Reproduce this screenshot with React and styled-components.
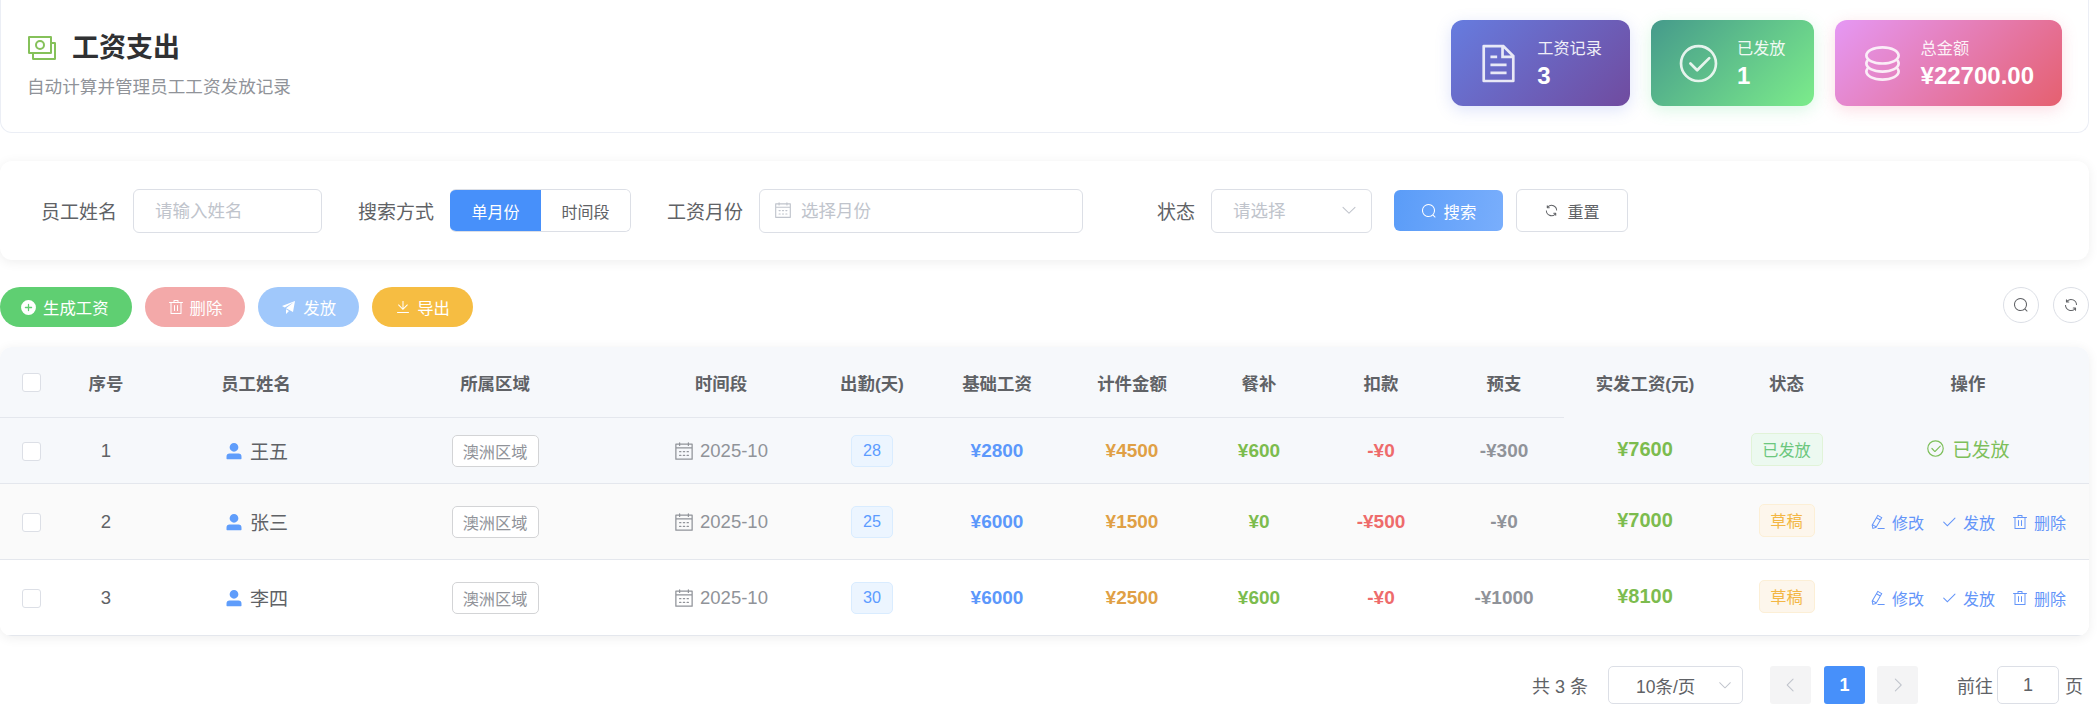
import React from 'react';
import styled, { createGlobalStyle } from 'styled-components';

const GlobalStyle = createGlobalStyle`
  html, body {
    margin: 0;
    padding: 0;
    background: #fff;
    font-family: "Liberation Sans", "Noto Sans CJK SC", sans-serif;
  }
  * { box-sizing: border-box; }
`;

const paths = {
  money: [
    'M256 640v192h640V384H768v-64h150.976c14.272 0 19.456 1.472 24.64 4.288a29.056 29.056 0 0 1 12.16 12.096c2.752 5.184 4.224 10.368 4.224 24.64v493.952c0 14.272-1.472 19.456-4.288 24.64a29.056 29.056 0 0 1-12.096 12.16c-5.184 2.752-10.368 4.224-24.64 4.224H233.024c-14.272 0-19.456-1.472-24.64-4.288a29.056 29.056 0 0 1-12.16-12.096c-2.688-5.184-4.224-10.368-4.224-24.576V640h64z',
    'M768 192H128v448h640V192zm64-22.976v493.952c0 14.272-1.472 19.456-4.288 24.64a29.056 29.056 0 0 1-12.096 12.16c-5.184 2.752-10.368 4.224-24.64 4.224H105.024c-14.272 0-19.456-1.472-24.64-4.288a29.056 29.056 0 0 1-12.16-12.096C65.536 682.432 64 677.248 64 663.04V169.024c0-14.272 1.472-19.456 4.288-24.64a29.056 29.056 0 0 1 12.096-12.16C85.568 129.536 90.752 128 104.96 128h685.952c14.272 0 19.456 1.472 24.64 4.288a29.056 29.056 0 0 1 12.16 12.096c2.752 5.184 4.224 10.368 4.224 24.64z',
    'M448 576a160 160 0 1 1 0-320 160 160 0 0 1 0 320zm0-64a96 96 0 1 0 0-192 96 96 0 0 0 0 192z',
  ],
  document: ['M832 384H576V128H192v768h640V384zm-26.496-64L640 154.496V320h165.504zM160 64h480l256 256v608a32 32 0 0 1-32 32H160a32 32 0 0 1-32-32V96a32 32 0 0 1 32-32zm160 448h384v64H320v-64zm0-192h160v64H320v-64zm0 384h384v64H320v-64z'],
  circleCheck: [
    'M512 896a384 384 0 1 0 0-768 384 384 0 0 0 0 768zm0 64a448 448 0 1 1 0-896 448 448 0 0 1 0 896z',
    'M745.344 361.344a32 32 0 0 1 45.312 45.312l-288 288a32 32 0 0 1-45.312 0l-160-160a32 32 0 1 1 45.312-45.312L480 626.752l265.344-265.408z',
  ],
  coin: [
    'm161.92 580.736 29.888 58.88C171.328 659.776 160 681.728 160 704c0 82.304 155.328 160 352 160s352-77.696 352-160c0-22.272-11.392-44.16-31.808-64.32l30.464-58.432C903.936 615.808 928 657.664 928 704c0 129.728-188.544 224-416 224S96 833.728 96 704c0-46.592 24.32-88.576 65.92-123.264z',
    'm161.92 388.736 29.888 58.88C171.328 467.84 160 489.792 160 512c0 82.304 155.328 160 352 160s352-77.696 352-160c0-22.272-11.392-44.16-31.808-64.32l30.464-58.432C903.936 423.808 928 465.664 928 512c0 129.728-188.544 224-416 224S96 641.728 96 512c0-46.592 24.32-88.576 65.92-123.264z',
    'M512 544c-227.456 0-416-94.272-416-224S284.544 96 512 96s416 94.272 416 224-188.544 224-416 224zm0-64c196.672 0 352-77.696 352-160S708.672 160 512 160s-352 77.696-352 160 155.328 160 352 160z',
  ],
  search: ['m795.904 750.72 124.992 124.928a32 32 0 0 1-45.248 45.248L750.656 795.904a416 416 0 1 1 45.248-45.248zM480 832a352 352 0 1 0 0-704 352 352 0 0 0 0 704z'],
  refresh: ['M771.776 794.88A384 384 0 0 1 128 512h64a320 320 0 0 0 555.712 216.448H654.72a32 32 0 1 1 0-64h149.056a32 32 0 0 1 32 32v148.928a32 32 0 1 1-64 0v-50.56zM276.288 295.616h92.992a32 32 0 0 1 0 64H220.16a32 32 0 0 1-32-32V178.56a32 32 0 0 1 64 0v50.56A384 384 0 0 1 896.128 512h-64a320 320 0 0 0-555.776-216.384z'],
  calendar: ['M128 384v512h768V192H768v32a32 32 0 1 1-64 0v-32H320v32a32 32 0 0 1-64 0v-32H128v128h768v64H128zm192-256h384V96a32 32 0 1 1 64 0v32h160a32 32 0 0 1 32 32v768a32 32 0 0 1-32 32H96a32 32 0 0 1-32-32V160a32 32 0 0 1 32-32h160V96a32 32 0 0 1 64 0v32zm-32 384h64a32 32 0 0 1 0 64h-64a32 32 0 0 1 0-64zm0 192h64a32 32 0 1 1 0 64h-64a32 32 0 1 1 0-64zm192-192h64a32 32 0 0 1 0 64h-64a32 32 0 0 1 0-64zm0 192h64a32 32 0 1 1 0 64h-64a32 32 0 1 1 0-64zm192-192h64a32 32 0 1 1 0 64h-64a32 32 0 1 1 0-64zm0 192h64a32 32 0 1 1 0 64h-64a32 32 0 1 1 0-64z'],
  user: ['M288 320a224 224 0 1 0 448 0 224 224 0 1 0-448 0zm544 608H160a32 32 0 0 1-32-32v-96a160 160 0 0 1 160-160h448a160 160 0 0 1 160 160v96a32 32 0 0 1-32 32z'],
  trash: ['M160 256H96a32 32 0 0 1 0-64h256V95.936a32 32 0 0 1 32-32h256a32 32 0 0 1 32 32V192h256a32 32 0 1 1 0 64h-64v672a32 32 0 0 1-32 32H192a32 32 0 0 1-32-32V256zm448-64v-64H416v64h192zM224 896h576V256H224v640zm192-128a32 32 0 0 1-32-32V416a32 32 0 0 1 64 0v320a32 32 0 0 1-32 32zm192 0a32 32 0 0 1-32-32V416a32 32 0 0 1 64 0v320a32 32 0 0 1-32 32z'],
  check: ['M406.656 706.944 195.84 496.256a32 32 0 1 0-45.248 45.248l256 256 512-512a32 32 0 0 0-45.248-45.248L406.592 706.944z'],
  pen: ['m199.04 672.64 193.984 112 224-387.968-193.92-112-224 388.032zm-23.872 60.16 32.896 148.288 144.896-45.696L175.168 732.8zM455.04 229.248l193.92 112 56.704-98.112-193.984-112-56.64 98.112zM104.32 708.8l384-665.024 304.768 175.936L409.152 884.8h.064l-248.448 78.336L104.32 708.8zm384 254.272v-64h448v64h-448z'],
  send: ['m64 448 832-320-128 704-446.08-243.328L832 192 242.816 545.472 64 448zm256 512V657.024L512 768 320 960z'],
  download: ['M160 832h704a32 32 0 1 1 0 64H160a32 32 0 1 1 0-64zm384-253.696 236.288-236.352 45.248 45.248L508.8 704 192 387.2l45.248-45.248L480 584.704V128h64v450.304z'],
  plus: ['M512 64a448 448 0 1 1 0 896 448 448 0 0 1 0-896zm-38.4 409.6H326.4a38.4 38.4 0 1 0 0 76.8h147.2v147.2a38.4 38.4 0 0 0 76.8 0V550.4h147.2a38.4 38.4 0 0 0 0-76.8H550.4V326.4a38.4 38.4 0 1 0-76.8 0v147.2z'],
  down: ['M831.872 340.864 512 652.672 192.128 340.864a30.592 30.592 0 0 0-42.752 0 29.12 29.12 0 0 0 0 41.6L489.664 714.24a32 32 0 0 0 44.672 0l340.288-331.712a29.12 29.12 0 0 0 0-41.728 30.592 30.592 0 0 0-42.752 0z'],
  left: ['M609.408 149.376 277.76 489.6a32 32 0 0 0 0 44.672l331.648 340.352a29.12 29.12 0 0 0 41.728 0 30.592 30.592 0 0 0 0-42.752L339.264 511.936l311.872-319.872a30.592 30.592 0 0 0 0-42.688 29.12 29.12 0 0 0-41.728 0z'],
  right: ['M340.864 149.312a30.592 30.592 0 0 0 0 42.752L652.736 512 340.864 831.872a30.592 30.592 0 0 0 0 42.752 29.12 29.12 0 0 0 41.728 0L714.24 534.336a32 32 0 0 0 0-44.672L382.592 149.376a29.12 29.12 0 0 0-41.728 0z'],
};

const Svg = styled.svg`
  flex: none;
  display: block;
  fill: currentColor;
`;

const Icon = ({ name, size = 16 }) => (
  <Svg width={size} height={size} viewBox="0 0 1024 1024">
    {paths[name].map(d => <path key={d} d={d} />)}
  </Svg>
);

const Page = styled.div`
  width: 2097px;
  min-height: 711px;
  padding-right: 8px;
  background: #fff;
  color: #606266;
`;

const HeaderCard = styled.header`
  height: 133px;
  display: flex;
  justify-content: space-between;
  padding: 20px 26px 0 25px;
  background: #fff;
  border: 1px solid #ebeef5;
  border-top: none;
  border-radius: 0 0 12px 12px;
`;

const TitleBlock = styled.div`
  padding-top: 9px;
`;

const TitleRow = styled.div`
  display: flex;
  align-items: center;
  gap: 14px;
  color: #85c15a;
`;

const PageTitle = styled.h1`
  margin: 0;
  font-size: 27px;
  line-height: 38px;
  font-weight: 700;
  color: #303133;
`;

const SubTitle = styled.p`
  margin: 7px 0 0 1px;
  font-size: 17.6px;
  line-height: 26px;
  color: #909399;
`;

const Stats = styled.div`
  display: flex;
  gap: 21px;
`;

const StatCard = styled.div`
  height: 86px;
  display: flex;
  align-items: center;
  gap: 17px;
  padding: 0 28px 0 26px;
  border-radius: 12px;
  color: #fff;
  background: ${props => props.$bg};
  box-shadow: 0 4px 16px ${props => props.$glow};
`;

const StatIcon = styled.div`
  opacity: 0.85;
`;

const StatLabel = styled.div`
  font-size: 16.2px;
  line-height: 22px;
  opacity: 0.9;
`;

const StatValue = styled.div`
  margin-top: 3px;
  font-size: 24px;
  line-height: 28px;
  font-weight: 700;
`;

const SearchCard = styled.section`
  height: 99px;
  margin-top: 28px;
  display: flex;
  align-items: center;
  padding-left: 40px;
  border-radius: 12px;
  background: #fff;
  box-shadow: 0 2px 12px rgba(0, 0, 0, 0.07);
`;

const FormItem = styled.div`
  display: flex;
  align-items: center;
  gap: 16px;
  margin-right: 36px;
`;

const FormLabel = styled.label`
  width: ${props => props.$width || 76}px;
  text-align: right;
  font-size: 19px;
  color: #606266;
  white-space: nowrap;
`;

const Field = styled.div`
  width: ${props => props.$width}px;
  height: 44px;
  display: flex;
  align-items: center;
  gap: 9px;
  padding-left: ${props => props.$pad || 21}px;
  padding-right: 13px;
  padding-bottom: 2px;
  border: 1px solid #dcdfe6;
  border-radius: 6px;
  background: #fff;
  font-size: 17.5px;
  color: #c0c4cc;
`;

const FieldText = styled.span`
  flex: 1;
`;

const Segmented = styled.div`
  display: flex;
  height: 43px;
  border-radius: 6px;
  overflow: hidden;
  border: 1px solid #dcdfe6;
  border-left: none;
`;

const Segment = styled.div`
  width: ${props => props.$width}px;
  display: flex;
  align-items: center;
  justify-content: center;
  font-size: 16px;
  background: ${props => (props.$active ? '#4790fa' : '#fff')};
  color: ${props => (props.$active ? '#fff' : '#606266')};
`;

const SearchButton = styled.button`
  width: 109px;
  height: 41px;
  margin-left: -14px;
  display: flex;
  align-items: center;
  justify-content: center;
  gap: 7px;
  border: none;
  border-radius: 6px;
  background: linear-gradient(100deg, #5a9cf8, #79aefc);
  color: #fff;
  font: inherit;
  font-size: 16.4px;
`;

const ResetButton = styled.button`
  width: 112px;
  height: 43px;
  margin-left: 13px;
  display: flex;
  align-items: center;
  justify-content: center;
  gap: 8px;
  border: 1px solid #dcdfe6;
  border-radius: 6px;
  background: #fff;
  color: #606266;
  font: inherit;
  font-size: 16px;
`;

const Toolbar = styled.div`
  height: 40px;
  margin-top: 27px;
  display: flex;
  justify-content: space-between;
  align-items: flex-start;
`;

const ToolGroup = styled.div`
  display: flex;
  gap: ${props => props.$gap}px;
`;

const PillButton = styled.button`
  height: 40px;
  display: flex;
  align-items: center;
  gap: 6px;
  padding: 0 23px 0 ${props => props.$left || 23}px;
  border: none;
  border-radius: 20px;
  background: ${props => props.$bg};
  color: #fff;
  font: inherit;
  font-size: 16.4px;
`;

const RoundButton = styled.button`
  width: 36px;
  height: 36px;
  display: flex;
  align-items: center;
  justify-content: center;
  padding: 0;
  border: 1px solid #dcdfe6;
  border-radius: 50%;
  background: #fff;
  color: #606266;
`;

const TableWrap = styled.div`
  margin-top: 20px;
  border-radius: 12px;
  overflow: hidden;
  box-shadow: 0 2px 12px rgba(0, 0, 0, 0.07);
`;

const Table = styled.table`
  width: 2089px;
  table-layout: fixed;
  border-collapse: separate;
  border-spacing: 0;
`;

const Th = styled.th`
  height: 71px;
  padding: 0;
  background: #f6f8fb;
  font-size: 17.4px;
  font-weight: 700;
  color: #606266;
  text-align: center;
  border-bottom: 1px solid ${props => (props.$fixed ? '#f6f8fb' : '#e4e7ed')};
`;

const Tr = styled.tr`
  background: ${props => props.$bg};
`;

const Td = styled.td`
  height: ${props => props.$height}px;
  padding: 0 0 ${props => (props.$fixed ? 3 : 0)}px;
  text-align: center;
  font-size: 18.5px;
  color: #606266;
  border-bottom: 1px solid #e4e7ed;
`;

const CheckBox = styled.span`
  display: inline-block;
  width: 19px;
  height: 19px;
  vertical-align: middle;
  background: #fff;
  border: 1px solid #dcdfe6;
  border-radius: 3px;
`;

const Inline = styled.span`
  display: inline-flex;
  align-items: center;
  justify-content: center;
  vertical-align: middle;
  gap: ${props => props.$gap || 6}px;
  color: ${props => props.$color || 'inherit'};
`;

const IconTint = styled.span`
  display: flex;
  color: ${props => props.$color};
`;

const Tag = styled.span`
  display: inline-flex;
  align-items: center;
  justify-content: center;
  vertical-align: middle;
  width: ${props => props.$width}px;
  height: ${props => props.$height || 32}px;
  font-size: 16.2px;
  border-radius: 5px;
  border: 1px solid ${props => props.$border};
  background: ${props => props.$bg};
  color: ${props => props.$color};
`;

const Amount = styled.span`
  font-size: ${props => props.$size || 19}px;
  font-weight: 700;
  color: ${props => props.$color};
`;

const DateText = styled.span`
  font-size: 18.5px;
  color: #909399;
`;

const NameText = styled.span`
  font-size: 19px;
  color: #606266;
`;

const ActionRow = styled.div`
  display: flex;
  justify-content: center;
  gap: 17px;
`;

const ActionLink = styled.span`
  display: flex;
  align-items: center;
  gap: 6px;
  font-size: 16px;
  color: #6495f9;
`;

const DoneText = styled.span`
  display: inline-flex;
  align-items: center;
  gap: 7px;
  font-size: 19px;
  color: #7dbf5a;
`;

const Pagination = styled.nav`
  height: 38px;
  margin-top: 30px;
  padding-right: 6px;
  display: flex;
  align-items: center;
  justify-content: flex-end;
  font-size: 18px;
  color: #606266;
`;

const PagerSelect = styled.div`
  width: 135px;
  height: 38px;
  margin: 0 27px 0 20px;
  display: flex;
  align-items: center;
  justify-content: space-between;
  padding: 0 9px 0 27px;
  font-size: 17.5px;
  border: 1px solid #dcdfe6;
  border-radius: 5px;
`;

const PagerChevron = styled.span`
  display: flex;
  color: #c0c4cc;
`;

const PageBox = styled.div`
  width: 41px;
  height: 38px;
  margin-right: ${props => props.$gap || 0}px;
  display: flex;
  align-items: center;
  justify-content: center;
  border-radius: 3px;
  background: ${props => (props.$active ? '#4790fa' : '#f4f4f5')};
  color: ${props => (props.$active ? '#fff' : '#c0c4cc')};
  font-weight: 700;
  font-size: 18px;
`;

const JumpInput = styled.div`
  width: 62px;
  height: 38px;
  margin: 0 6px 0 4px;
  display: flex;
  align-items: center;
  justify-content: center;
  border: 1px solid #dcdfe6;
  border-radius: 5px;
`;

const columns = [
  { width: 62 }, { width: 88, label: '序号' }, { width: 212, label: '员工姓名' }, { width: 266, label: '所属区域' },
  { width: 186, label: '时间段' }, { width: 116, label: '出勤(天)' }, { width: 134, label: '基础工资' },
  { width: 136, label: '计件金额' }, { width: 118, label: '餐补' }, { width: 126, label: '扣款' }, { width: 120, label: '预支' },
  { width: 162, label: '实发工资(元)', fixed: true }, { width: 121, label: '状态', fixed: true }, { width: 242, label: '操作', fixed: true },
];

const rows = [
  { id: 1, name: '王五', days: 28, base: 2800, piece: 4500, meal: 600, cut: 0, adv: 300, pay: 7600, done: true, bg: '#f6f8fb', height: 66 },
  { id: 2, name: '张三', days: 25, base: 6000, piece: 1500, meal: 0, cut: 500, adv: 0, pay: 7000, bg: '#fafafa', height: 76 },
  { id: 3, name: '李四', days: 30, base: 6000, piece: 2500, meal: 600, cut: 0, adv: 1000, pay: 8100, bg: '#fff', height: 76 },
];

const Row = ({ r }) => (
  <Tr $bg={r.bg}>
    <Td $height={r.height}><CheckBox /></Td>
    <Td $height={r.height}>{r.id}</Td>
    <Td $height={r.height}>
      <Inline><IconTint $color="#5f9dfb"><Icon name="user" size={20} /></IconTint><NameText>{r.name}</NameText></Inline>
    </Td>
    <Td $height={r.height}><Tag $width={87} $border="#d3d4d6" $bg="#fff" $color="#909399">澳洲区域</Tag></Td>
    <Td $height={r.height}>
      <Inline><IconTint $color="#909399"><Icon name="calendar" size={20} /></IconTint><DateText>2025-10</DateText></Inline>
    </Td>
    <Td $height={r.height}><Tag $width={42} $border="#d9ecff" $bg="#ecf5ff" $color="#5c9cff">{r.days}</Tag></Td>
    <Td $height={r.height}><Amount $color="#5c98fb">¥{r.base}</Amount></Td>
    <Td $height={r.height}><Amount $color="#e0a045">¥{r.piece}</Amount></Td>
    <Td $height={r.height}><Amount $color="#7cbc4e">¥{r.meal}</Amount></Td>
    <Td $height={r.height}><Amount $color="#ee6b6b">-¥{r.cut}</Amount></Td>
    <Td $height={r.height}><Amount $color="#909399">-¥{r.adv}</Amount></Td>
    <Td $height={r.height} $fixed><Amount $size={20} $color="#7cbc4e">¥{r.pay}</Amount></Td>
    <Td $height={r.height} $fixed>
      {r.done
        ? <Tag $width={72} $height={33} $border="#e1f3d8" $bg="#ecf9f0" $color="#6cc77e">已发放</Tag>
        : <Tag $width={56} $height={33} $border="#fcefd6" $bg="#fdf6ec" $color="#f3b644">草稿</Tag>}
    </Td>
    <Td $height={r.height} $fixed={r.done}>
      {r.done
        ? <DoneText><Icon name="circleCheck" size={19} />已发放</DoneText>
        : (
          <ActionRow>
            <ActionLink><Icon name="pen" />修改</ActionLink>
            <ActionLink><Icon name="check" />发放</ActionLink>
            <ActionLink><Icon name="trash" />删除</ActionLink>
          </ActionRow>
        )}
    </Td>
  </Tr>
);

export default function App() {
  return (
    <Page>
      <GlobalStyle />
      <HeaderCard>
        <TitleBlock>
          <TitleRow>
            <Icon name="money" size={32} />
            <PageTitle>工资支出</PageTitle>
          </TitleRow>
          <SubTitle>自动计算并管理员工工资发放记录</SubTitle>
        </TitleBlock>
        <Stats>
          <StatCard $bg="linear-gradient(135deg, #667cdf, #704b9f)" $glow="rgba(102, 126, 234, 0.22)">
            <StatIcon><Icon name="document" size={43} /></StatIcon>
            <div><StatLabel>工资记录</StatLabel><StatValue>3</StatValue></div>
          </StatCard>
          <StatCard $bg="linear-gradient(135deg, #459a8b, #7cec8b)" $glow="rgba(80, 220, 130, 0.22)">
            <StatIcon><Icon name="circleCheck" size={43} /></StatIcon>
            <div><StatLabel>已发放</StatLabel><StatValue>1</StatValue></div>
          </StatCard>
          <StatCard $bg="linear-gradient(135deg, #e598f5, #e5606f)" $glow="rgba(240, 100, 130, 0.22)">
            <StatIcon><Icon name="coin" size={43} /></StatIcon>
            <div><StatLabel>总金额</StatLabel><StatValue>¥22700.00</StatValue></div>
          </StatCard>
        </Stats>
      </HeaderCard>

      <SearchCard>
        <FormItem>
          <FormLabel $width={77}>员工姓名</FormLabel>
          <Field $width={189}>请输入姓名</Field>
        </FormItem>
        <FormItem>
          <FormLabel>搜索方式</FormLabel>
          <Segmented>
            <Segment $width={91} $active>单月份</Segment>
            <Segment $width={89}>时间段</Segment>
          </Segmented>
        </FormItem>
        <FormItem>
          <FormLabel>工资月份</FormLabel>
          <Field $width={324} $pad={14}>
            <Icon name="calendar" size={18} />
            <FieldText>选择月份</FieldText>
          </Field>
        </FormItem>
        <FormItem>
          <FormLabel $width={76}>状态</FormLabel>
          <Field $width={161}>
            <FieldText>请选择</FieldText>
            <Icon name="down" size={18} />
          </Field>
        </FormItem>
        <SearchButton><Icon name="search" size={16} />搜索</SearchButton>
        <ResetButton><Icon name="refresh" size={15} />重置</ResetButton>
      </SearchCard>

      <Toolbar>
        <ToolGroup $gap={13}>
          <PillButton $bg="#5fcf72" $left={20}><Icon name="plus" size={17} />生成工资</PillButton>
          <PillButton $bg="#f3a9a9"><Icon name="trash" />删除</PillButton>
          <PillButton $bg="#a0c8fb"><Icon name="send" />发放</PillButton>
          <PillButton $bg="#f6bd42"><Icon name="download" />导出</PillButton>
        </ToolGroup>
        <ToolGroup $gap={14}>
          <RoundButton><Icon name="search" size={16} /></RoundButton>
          <RoundButton><Icon name="refresh" size={16} /></RoundButton>
        </ToolGroup>
      </Toolbar>

      <TableWrap>
        <Table>
          <colgroup>
            {columns.map((c, i) => <col key={i} width={c.width} />)}
          </colgroup>
          <thead>
            <tr>
              <Th><CheckBox /></Th>
              {columns.slice(1).map(c => <Th key={c.label} $fixed={c.fixed}>{c.label}</Th>)}
            </tr>
          </thead>
          <tbody>
            {rows.map(r => <Row key={r.id} r={r} />)}
          </tbody>
        </Table>
      </TableWrap>

      <Pagination>
        <span>共 3 条</span>
        <PagerSelect>
          10条/页
          <PagerChevron><Icon name="down" size={16} /></PagerChevron>
        </PagerSelect>
        <PageBox $gap={13}><Icon name="left" size={18} /></PageBox>
        <PageBox $gap={12} $active>1</PageBox>
        <PageBox $gap={39}><Icon name="right" size={18} /></PageBox>
        <span>前往</span>
        <JumpInput>1</JumpInput>
        <span>页</span>
      </Pagination>
    </Page>
  );
}
